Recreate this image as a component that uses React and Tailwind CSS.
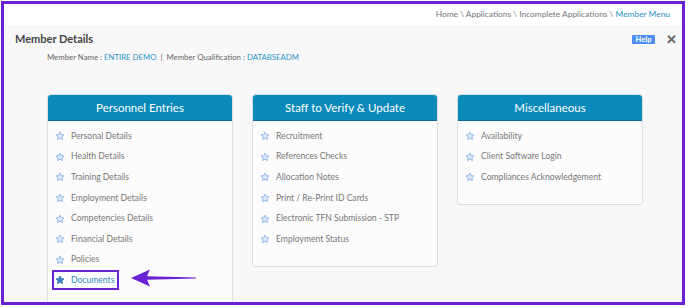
import React from "react";

const Star = ({ filled }) => (
  <svg width="10" height="10" viewBox="0 0 24 24" className="shrink-0">
    <path
      d="M12 2.5l2.9 6.1 6.6.8-4.9 4.6 1.3 6.6L12 17.3l-5.9 3.3 1.3-6.6-4.9-4.6 6.6-.8z"
      fill={filled ? "#3f7fc0" : "#dce9fb"}
      stroke={filled ? "#3a78b8" : "#8db4ea"}
      strokeWidth="2.2"
      strokeLinejoin="round"
    />
  </svg>
);

const Item = ({ label }) => (
  <div className="h-[20.6px] flex items-center pl-[7px] gap-[6px] text-[8.6px] text-[#777]">
    <Star />
    <span>{label}</span>
  </div>
);

const Card = ({ title, items, extra, className = "" }) => (
  <div className={"w-[186px] border border-[#dedede] rounded-[3px] bg-[#fcfcfc] " + className}>
    <div className="h-[26px] bg-[#0a89bb] rounded-t-[3px] flex items-center justify-center text-white text-[11.5px] border-b border-[#0a6f98]">
      {title}
    </div>
    <div className="pt-[5px] pb-4">
      {items.map((i) => (
        <Item key={i} label={i} />
      ))}
      {extra}
    </div>
  </div>
);

export default function App() {
  return (
    <div className="w-[688px] h-[308px] bg-white pt-px pl-px" style={{ fontFamily: "Lato, 'Open Sans', sans-serif" }}>
      <div className="w-[684px] h-[304px] border-[3px] border-[#6b22d4] overflow-hidden relative bg-[#f8f8f8]">
        <div className="h-[21px] bg-white flex items-center justify-end pr-[12px] text-[8.4px] text-[#777]">
          <span>Home \ Applications \ Incomplete Applications \&nbsp;</span>
          <span className="text-[#2b93c9]">Member Menu</span>
        </div>
        <div className="flex items-center pl-[11px] pr-[5px] h-[26px] mt-px">
          <span className="font-bold text-[11px] text-[#444]">Member Details</span>
          <div className="ml-auto flex items-center gap-[11px]">
            <span className="bg-[#4d8ef2] text-white text-[7.5px] font-bold w-[23px] text-center h-[9px] leading-[9px] rounded-[1px]">Help</span>
            <span className="text-[#666] font-bold text-[13px] leading-none">✕</span>
          </div>
        </div>
        <div className="pl-[43px] text-[7.8px] text-[#666] h-[12px] flex items-center">
          <span>Member Name :&nbsp;</span>
          <span className="text-[#2b93c9]">ENTIRE DEMO</span>
          <span>&nbsp;&nbsp;|&nbsp;&nbsp;Member Qualification :&nbsp;</span>
          <span className="text-[#2b93c9]">DATABSEADM</span>
        </div>
        <div className="flex items-start gap-[19px] pl-[43px] mt-[30px]">
          <Card
            title="Personnel Entries"
            className="h-[230px]"
            items={[
              "Personal Details",
              "Health Details",
              "Training Details",
              "Employment Details",
              "Competencies Details",
              "Financial Details",
              "Policies",
            ]}
            extra={
              <div className="h-[20.6px] flex items-center pl-[4px]">
                <div className="flex items-center gap-[6px] border-2 border-[#6b22d4] pl-px pr-[3px] h-[20px] text-[8.6px] text-[#2b8ac4]">
                  <Star filled />
                  <span>Documents</span>
                </div>
              </div>
            }
          />
          <Card
            title="Staff to Verify & Update"
            items={[
              "Recruitment",
              "References Checks",
              "Allocation Notes",
              "Print / Re-Print ID Cards",
              "Electronic TFN Submission - STP",
              "Employment Status",
            ]}
          />
          <Card
            title="Miscellaneous"
            items={["Availability", "Client Software Login", "Compliances Acknowledgement"]}
          />
        </div>
        <svg className="absolute left-[126px] top-[264px]" width="68" height="20" viewBox="0 0 68 20">
          <path d="M1 10 L20 1.5 L17 8.2 L66 9.4 L66 10.6 L17 11.8 L20 18.5 Z" fill="#6b22d4" />
        </svg>
      </div>
    </div>
  );
}
